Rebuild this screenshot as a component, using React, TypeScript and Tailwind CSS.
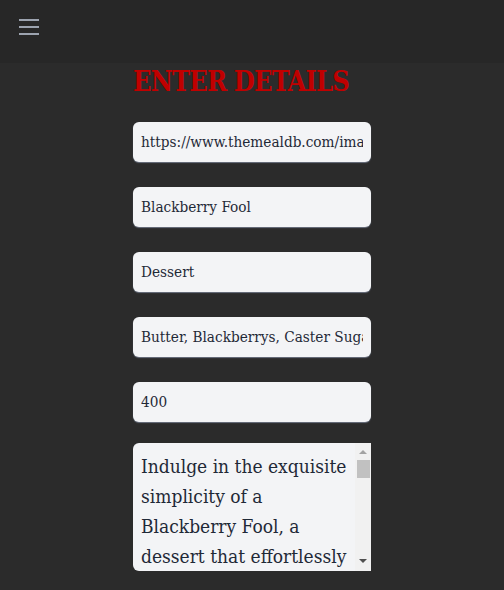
import * as React from "react";
import { useState } from "react";

const fields = [
  "https://www.themealdb.com/images/media/meals/rpvptu1511641092.jpg",
  "Blackberry Fool",
  "Dessert",
  "Butter, Blackberrys, Caster Sugar, Lemon, Double Cream, Yogurt",
  "400",
];

const description =
  "Indulge in the exquisite simplicity of a Blackberry Fool, a dessert that effortlessly combines the tartness of fresh blackberries with the velvety richness of whipped cream and yogurt.";

export default function App() {
  const [values, setValues] = useState(fields);
  const [desc, setDesc] = useState(description);

  return (
    <div className="min-h-screen bg-[#2b2b2b]" style={{ fontFamily: '"DejaVu Serif Condensed", "DejaVu Serif", serif' }}>
      <header className="h-[63px] bg-[#272727] flex items-start px-[19px] pt-[19px]">
        <button className="flex flex-col gap-[5px] w-5">
          <span className="block h-[2px] w-5 bg-[#9ca3af]" />
          <span className="block h-[2px] w-5 bg-[#9ca3af]" />
          <span className="block h-[2px] w-5 bg-[#9ca3af]" />
        </button>
      </header>

      <form className="w-[238px] mx-auto flex flex-col" onSubmit={e => e.preventDefault()}>
        <h1 className="text-[27px] leading-[36px] font-bold text-[#c00000] tracking-[-0.85px] pt-[1px]">
          ENTER DETAILS
        </h1>

        <div className="flex flex-col gap-[25px] mt-[22px]">
          {values.map((v, i) => (
            <input
              key={i}
              value={v}
              onChange={e => {
                const next = [...values];
                next[i] = e.target.value;
                setValues(next);
              }}
              className="h-10 w-full rounded-md bg-[#f3f4f6] px-2 text-[15.2px] text-[#1f2937] outline-none shadow-[0_1px_1px_#6b7280]"
            />
          ))}
        </div>

        <div className="relative mt-[21px] h-32">
          <textarea
            value={desc}
            onChange={e => setDesc(e.target.value)}
            className="h-32 w-full resize-none overflow-y-scroll rounded-md bg-[#f3f4f6] pl-2 pr-[22px] pt-[8px] text-[19px] leading-[30px] text-[#1f2937] outline-none [scrollbar-width:none]"
          />
          {/* fake classic scrollbar */}
          <div className="absolute right-0 top-0 h-32 w-[16px] bg-[#f1f1f1] flex flex-col items-center">
            <div className="mt-[7px] h-0 w-0 border-x-[4px] border-b-[4px] border-x-transparent border-b-[#a3a3a3]" />
            <div className="mt-[6px] h-[18px] w-[13px] bg-[#c1c1c1]" />
            <div className="mt-auto mb-[8px] h-0 w-0 border-x-[4px] border-t-[4px] border-x-transparent border-t-[#505050]" />
          </div>
        </div>
      </form>
    </div>
  );
}
